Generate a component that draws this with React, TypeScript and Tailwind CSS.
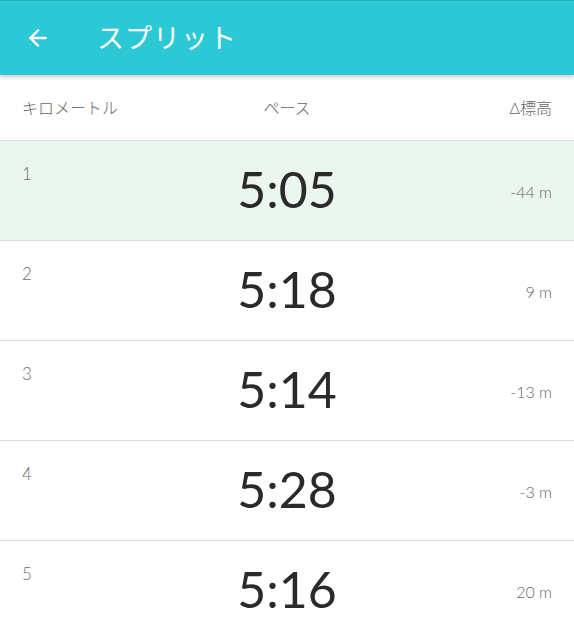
import { ArrowLeft } from "lucide-react";

type Split = { km: number; pace: string; elev: string };

const splits: Split[] = [
  { km: 1, pace: "5:05", elev: "-44 m" },
  { km: 2, pace: "5:18", elev: "9 m" },
  { km: 3, pace: "5:14", elev: "-13 m" },
  { km: 4, pace: "5:28", elev: "-3 m" },
  { km: 5, pace: "5:16", elev: "20 m" },
];

export default function App() {
  return <div className="h-[640px] w-[574px] overflow-hidden bg-white" style={{ fontFamily: "Lato, 'Noto Sans CJK JP', sans-serif" }}>
    <div className="relative z-10 flex h-[75px] items-center border-t border-[#23b3c0] bg-[#2dc8d6] shadow-[0_2px_4px_rgba(0,0,0,0.22)]">
      <ArrowLeft className="ml-[25px] h-[26px] w-[26px] text-white" strokeWidth={2.2} />
      <h1 className="ml-[46px] text-[27px] tracking-[1px] text-white">スプリット</h1>
    </div>
    <div className="grid h-[66px] grid-cols-3 items-center border-b border-[#dedede] px-[22px] text-[16px] font-light text-[#666]">
      <span>キロメートル</span>
      <span className="text-center">ペース</span>
      <span className="text-right">Δ標高</span>
    </div>
    {splits.map(row =>
      <div key={row.km} className={`grid h-[100px] grid-cols-3 items-center border-b border-[#dcdcdc] px-[22px] ${row.km === 1 ? "bg-[#eaf6ee]" : "bg-white"}`}>
        <span className="self-start pt-[20px] text-[17px] font-light text-[#6f6f6f]">{row.km}</span>
        <span className="pb-[4px] text-center text-[50px] leading-none text-[#2a2a2a]">{row.pace}</span>
        <span className="pt-[2px] text-right text-[16px] font-light text-[#666]">{row.elev}</span>
      </div>)}
  </div>;
}
